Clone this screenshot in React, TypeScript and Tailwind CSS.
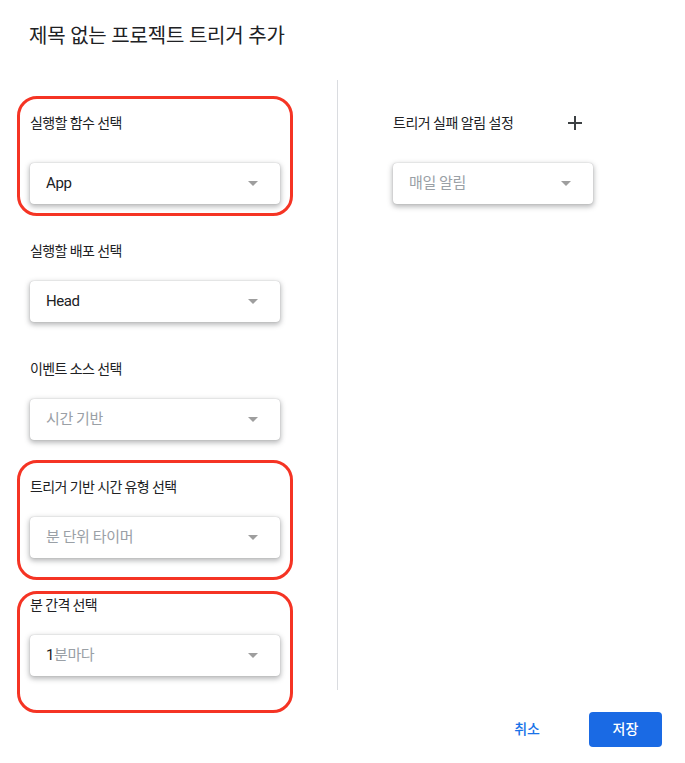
import React from "react";

const FONT = "font-['Roboto','Noto_Sans_CJK_KR',sans-serif]";

type FieldProps = {
  label: string;
  value: React.ReactNode;
  placeholder?: boolean;
  labelGap?: string;
  width?: string;
};

function Caret() {
  return (
    <svg width="10" height="5" viewBox="0 0 10 5" className="shrink-0">
      <path d="M0 0 L10 0 L5 5 Z" fill="#9e9e9e" />
    </svg>
  );
}

function SelectBox({ value, placeholder, width = "w-[250px]" }: { value: React.ReactNode; placeholder?: boolean; width?: string }) {
  return (
    <div
      className={`${width} flex h-[41px] items-center justify-between rounded-[4px] bg-white pl-[16px] pr-[22px] shadow-[0_0_1px_rgba(60,64,67,0.35),0_2px_5px_1px_rgba(60,64,67,0.35)]`}
    >
      <span
        className={`text-[15px] tracking-[-0.4px] ${placeholder ? "text-[#9aa0a6]" : "text-[#202124]"}`}
      >
        {value}
      </span>
      <Caret />
    </div>
  );
}

function Field({ label, value, placeholder, labelGap = "mt-[30px]" }: FieldProps) {
  return (
    <div className="flex flex-col">
      <div className="h-[20px] text-[14px] leading-[20px] tracking-[-0.6px] text-[#202124]">{label}</div>
      <div className={labelGap}>
        <SelectBox value={value} placeholder={placeholder} />
      </div>
    </div>
  );
}

function Marked({ children, inset }: { children: React.ReactNode; inset: string }) {
  return (
    <div className="relative">
      {children}
      <div className={`pointer-events-none absolute rounded-[20px] border-[3px] border-[#f53424] ${inset}`} />
    </div>
  );
}

export default function App() {
  return (
    <div className={`relative h-[763px] w-[685px] bg-white ${FONT}`}>
      <div className="flex h-[80px] items-start pl-[29px] pt-[22px]">
        <h1 className="text-[20px] leading-[28px] tracking-[-0.2px] text-[#202124]">
          제목 없는 프로젝트 트리거 추가
        </h1>
      </div>

      <div className="flex pl-[30px]">
        <div className="flex w-[250px] flex-col gap-[37px] pt-[33px]">
          <Marked inset="-left-[13px] -right-[13px] -top-[17px] -bottom-[12px]">
            <Field label="실행할 함수 선택" value="App" />
          </Marked>
          <Field label="실행할 배포 선택" value="Head" labelGap="mt-[20px]" />
          <Field label="이벤트 소스 선택" value="시간 기반" placeholder labelGap="mt-[20px]" />
          <Marked inset="-left-[13px] -right-[13px] -top-[17px] -bottom-[22px]">
            <Field label="트리거 기반 시간 유형 선택" value="분 단위 타이머" placeholder labelGap="mt-[20px]" />
          </Marked>
          <Marked inset="-left-[13px] -right-[13px] -top-[4px] -bottom-[37px]">
            <Field
              label="분 간격 선택"
              value={
                <>
                  <span className="text-[#202124]">1</span>분마다
                </>
              }
              placeholder
              labelGap="mt-[20px]"
            />
          </Marked>
        </div>

        <div className="ml-[57px] h-[610px] w-px bg-[#dadce0]" />

        <div className="ml-[55px] flex flex-col pt-[33px]">
          <div className="flex h-[20px] items-center">
            <span className="w-[175px] text-[14px] leading-[20px] tracking-[-0.5px] text-[#202124]">
              트리거 실패 알림 설정
            </span>
            <svg width="14" height="14" viewBox="0 0 14 14">
              <path d="M7 0 V14 M0 7 H14" stroke="#3c4043" strokeWidth="2" />
            </svg>
          </div>
          <div className="mt-[30px]">
            <SelectBox value="매일 알림" placeholder width="w-[200px]" />
          </div>
        </div>
      </div>

      <div className="absolute bottom-[16px] right-[23px] flex items-center gap-[25px]">
        <button className="h-[35px] px-[24px] text-[14px] font-medium text-[#1a73e8]">취소</button>
        <button className="h-[35px] w-[73px] rounded-[4px] bg-[#1a6ae4] text-[14px] font-medium text-white">
          저장
        </button>
      </div>
    </div>
  );
}
